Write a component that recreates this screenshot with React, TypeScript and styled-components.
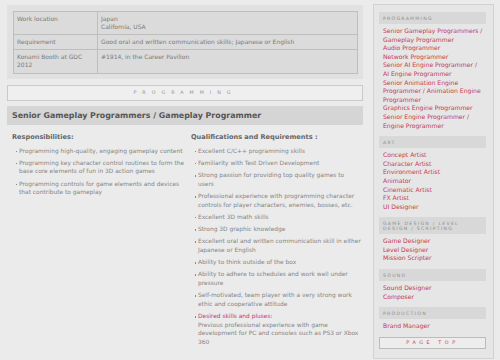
import styled, { createGlobalStyle } from 'styled-components'

const GlobalStyle = createGlobalStyle`
  html, body {
    margin: 0;
    padding: 0;
    background: #ebebeb;
  }
  body {
    font-family: "DejaVu Sans", Verdana, sans-serif;
    color: #808080;
  }
`

type Link = string
type Section = { title: string, links: Link[] }

const sections: Section[] = [
  {
    title: 'PROGRAMMING',
    links: [
      'Senior Gameplay Programmers / Gameplay Programmer',
      'Audio Programmer',
      'Network Programmer',
      'Senior AI Engine Programmer / AI Engine Programmer',
      'Senior Animation Engine Programmer / Animation Engine Programmer',
      'Graphics Engine Programmer',
      'Senior Engine Programmer / Engine Programmer',
    ],
  },
  {
    title: 'ART',
    links: ['Concept Artist', 'Character Artist', 'Environment Artist', 'Animator', 'Cinematic Artist', 'FX Artist', 'UI Designer'],
  },
  {
    title: 'GAME DESIGN / LEVEL DESIGN / SCRIPTING',
    links: ['Game Designer', 'Level Designer', 'Mission Scripter'],
  },
  { title: 'SOUND', links: ['Sound Designer', 'Composer'] },
  { title: 'PRODUCTION', links: ['Brand Manager'] },
]

const responsibilities = [
  'Programming high-quality, engaging gameplay content',
  'Programming key character control routines to form the base core elements of fun in 3D action games',
  'Programming controls for game elements and devices that contribute to gameplay',
]

const qualifications = [
  'Excellent C/C++ programming skills',
  'Familiarity with Test Driven Development',
  'Strong passion for providing top quality games to users',
  'Professional experience with programming character controls for player characters, enemies, bosses, etc.',
  'Excellent 3D math skills',
  'Strong 3D graphic knowledge',
  'Excellent oral and written communication skill in either Japanese or English',
  'Ability to think outside of the box',
  'Ability to adhere to schedules and work well under pressure',
  'Self-motivated, team player with a very strong work ethic and cooperative attitude',
]

const Page = styled.div`
  display: flex;
  align-items: flex-start;
  gap: 10px;
  padding: 4px 0 0 7px;
`

const Main = styled.main`
  width: 356px;
  padding-top: 1px;
`

const InfoPanel = styled.div`
  background: #e1e1e1;
  padding: 6px 5px 5px 6px;
`

const InfoTable = styled.table`
  width: 100%;
  border-collapse: collapse;
  background: #dbdbdb;
  font-size: 6px;
  line-height: 8.7px;
  color: #7a7a7a;

  td {
    border: 1px solid #bebebe;
    padding: 2.5px 3px;
    vertical-align: top;
  }
  td:first-child {
    width: 77px;
  }
`

const CategoryBox = styled.div`
  margin-top: 6px;
  height: 14px;
  border: 1px solid #c9c9c9;
  background: #efefef;
  display: flex;
  align-items: center;
  justify-content: center;
  font-size: 4.8px;
  letter-spacing: 6px;
  color: #909090;
`

const TitleBar = styled.h1`
  margin: 5px 0 0;
  height: 19px;
  background: #d5d5d5;
  display: flex;
  align-items: center;
  padding-left: 5px;
  font-size: 7.9px;
  font-weight: bold;
  color: #555;
`

const Columns = styled.div`
  display: grid;
  grid-template-columns: 175px 1fr;
  gap: 4px;
  padding: 8px 0 0 5px;
`

const Column = styled.div<{ $padRight?: number }>`
  padding-right: ${p => p.$padRight ?? 0}px;
`

const ColumnHeading = styled.h2`
  margin: 0 0 5px;
  font-size: 6.6px;
  line-height: 9px;
  font-weight: bold;
  color: #666;
`

const BulletList = styled.ul`
  list-style: none;
  margin: 0;
  padding: 0;
`

const Bullet = styled.li`
  position: relative;
  padding-left: 7px;
  margin-bottom: 3.5px;
  font-size: 5.9px;
  line-height: 8.7px;
  color: #858585;

  &::before {
    content: '';
    position: absolute;
    left: 3.5px;
    top: 4px;
    width: 1.7px;
    height: 1.7px;
    background: #888;
  }
`

const Desired = styled.span`
  color: #c83478;
`

const Sidebar = styled.aside`
  width: 121px;
  box-sizing: border-box;
  border: 1px solid #d2d2d2;
  background: #e6e6e6;
  padding: 7px 7px 6px 5px;
`

const SideHeading = styled.div`
  background: #d8d8d8;
  padding: 3.5px 3px 3.5px 4px;
  font-size: 4.6px;
  line-height: 5px;
  letter-spacing: 1.3px;
  color: #8d8d8d;
`

const SideLinks = styled.ul`
  list-style: none;
  margin: 3px 0 6px;
  padding: 0 3px 0 4px;
`

const SideLink = styled.li`
  font-size: 6.1px;
  line-height: 8.6px;
  color: #c43a4e;
`

const PageTop = styled.div`
  height: 12px;
  margin-bottom: 3px;
  box-sizing: border-box;
  border: 1px solid #bcbcbc;
  background: #ededed;
  display: flex;
  align-items: center;
  justify-content: center;
  font-size: 4.8px;
  letter-spacing: 3.6px;
  color: #c43a4e;
`

export default function App() {
  return <>
    <GlobalStyle />
    <Page>
      <Main>
        <InfoPanel>
          <InfoTable>
            <tbody>
              <tr>
                <td>Work location</td>
                <td>Japan<br />California, USA</td>
              </tr>
              <tr>
                <td>Requirement</td>
                <td>Good oral and written communication skills; Japanese or English</td>
              </tr>
              <tr>
                <td>Konami Booth at GDC 2012</td>
                <td>#1914, in the Career Pavilion</td>
              </tr>
            </tbody>
          </InfoTable>
        </InfoPanel>
        <CategoryBox>PROGRAMMING</CategoryBox>
        <TitleBar>Senior Gameplay Programmers / Gameplay Programmer</TitleBar>
        <Columns>
          <Column>
            <ColumnHeading>Responsibilities:</ColumnHeading>
            <BulletList>
              {responsibilities.map(r => <Bullet key={r}>{r}</Bullet>)}
            </BulletList>
          </Column>
          <Column $padRight={2}>
            <ColumnHeading>Qualifications and Requirements :</ColumnHeading>
            <BulletList>
              {qualifications.map(q => <Bullet key={q}>{q}</Bullet>)}
              <Bullet>
                <Desired>Desired skills and pluses:</Desired><br />
                Previous professional experience with game development for PC and consoles such as PS3 or Xbox 360
              </Bullet>
            </BulletList>
          </Column>
        </Columns>
      </Main>
      <Sidebar>
        {sections.map(s => <div key={s.title}>
          <SideHeading>{s.title}</SideHeading>
          <SideLinks>
            {s.links.map(l => <SideLink key={l}>{l}</SideLink>)}
          </SideLinks>
        </div>)}
        <PageTop>PAGE TOP</PageTop>
      </Sidebar>
    </Page>
  </>
}
